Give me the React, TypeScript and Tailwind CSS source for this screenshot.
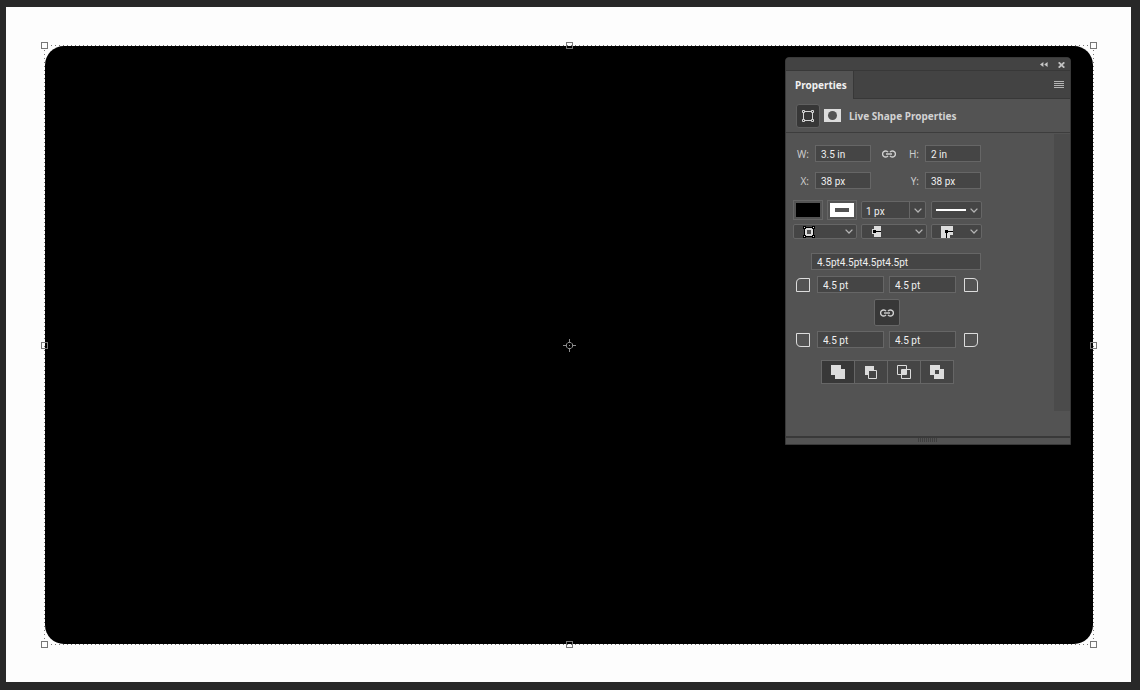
import type { ReactNode } from 'react';
import clsx from 'clsx';

const FIELD = 'h-[17px] min-w-0 border border-[#666666] bg-[#454545] px-[5px] pt-[2px] font-[Roboto,sans-serif] text-[10px] leading-[13px] text-[#f0f0f0] outline-none';

const HANDLES = [
  '-left-[3px] -top-[3px]',
  'left-1/2 -top-[3px] -ml-[3px]',
  '-right-[3px] -top-[3px]',
  '-left-[3px] top-1/2 -mt-[3px]',
  '-right-[3px] top-1/2 -mt-[3px]',
  '-left-[3px] -bottom-[3px]',
  'left-1/2 -bottom-[3px] -ml-[3px]',
  '-right-[3px] -bottom-[3px]',
];

function LinkIcon() {
  return (
    <svg width="14" height="8" viewBox="0 0 14 8" fill="none" stroke="#cfcfcf" strokeWidth="1.4">
      <path d="M6 2.2A3 3 0 1 0 6 5.8M8 2.2a3 3 0 1 1 0 3.6" />
      <path d="M4 4h6" />
    </svg>
  );
}

function Chevron() {
  return (
    <svg width="8" height="5" viewBox="0 0 8 5" fill="none" stroke="#b4b4b4" strokeWidth="1.3">
      <path d="M0.6 0.6L4 4l3.4-3.4" />
    </svg>
  );
}

function CornerIcon({ className }: { className?: string }) {
  return (
    <svg className={className} width="14" height="14" viewBox="0 0 14 14" fill="none" stroke="#dcdcdc">
      <path d="M0.5 13.5V5C0.5 2 2 0.5 5 0.5h8.5v13z" />
    </svg>
  );
}

function Field({ id, label, value, children }: { id: string; label: string; value: string; children?: ReactNode }) {
  return (
    <>
      <div className="flex items-center">
        {children}
        <label htmlFor={id} className="ml-auto pt-px text-[#cccccc]">{label}</label>
      </div>
      <input id={id} defaultValue={value} className={FIELD} />
    </>
  );
}

function IconSelect({ label, options, className, children }: { label: string; options: string[]; className: string; children: ReactNode }) {
  return (
    <div className={clsx('relative flex items-center justify-between rounded-[2px] border border-[#666666] bg-[#454545] pr-[3px]', className)}>
      {children}
      <Chevron />
      <select aria-label={label} className="absolute inset-0 appearance-none outline-none">
        {options.map((option) => (
          <option key={option} value={option} aria-label={option} />
        ))}
      </select>
    </div>
  );
}

function CornerRow({ names, bottom }: { names: [string, string]; bottom?: boolean }) {
  return (
    <div className="ml-[3px] flex items-center">
      <CornerIcon className={clsx(bottom && '-scale-y-100')} />
      <div className="ml-[7px] mr-2 flex gap-[5px]">
        {names.map((name) => (
          <input key={name} aria-label={name} defaultValue="4.5 pt" className={clsx(FIELD, 'w-[67px]')} />
        ))}
      </div>
      <CornerIcon className={clsx('-scale-x-100', bottom && '-scale-y-100')} />
    </div>
  );
}

const PATH_OPS = [
  {
    name: 'Unite shapes',
    icon: <path d="M0 0h10v4h4v10H4v-4H0z" fill="#dcdcdc" />,
  },
  {
    name: 'Subtract front shape',
    icon: (
      <>
        <path d="M1 1h9v9H1z" fill="#dcdcdc" />
        <path d="M4.5 5.5h8v8h-8z" fill="#454545" stroke="#dcdcdc" />
      </>
    ),
  },
  {
    name: 'Intersect shapes',
    icon: (
      <>
        <path d="M0.5 0.5h9v9h-9zM4.5 4.5h9v9h-9z" fill="none" stroke="#dcdcdc" />
        <path d="M5 5h4v4H5z" fill="#dcdcdc" />
      </>
    ),
  },
  {
    name: 'Exclude overlapping shapes',
    icon: <path fillRule="evenodd" d="M0 0h10v4h4v10H4v-4H0zM5 5v4h4V5z" fill="#dcdcdc" />,
  },
];

function PropertiesPanel() {
  return (
    <section className="absolute right-[23px] top-3 w-[286px] overflow-hidden rounded-t-[4px] border border-[#393939] bg-[#535353] text-[10px] leading-[14px]">
      <div className="flex h-[13px] items-center justify-end gap-[10px] border-b border-[#383838] bg-[#434343] pr-[5px] pt-px">
        <button aria-label="Collapse panel">
          <svg width="8" height="5" viewBox="0 0 8 5" fill="#c8c8c8">
            <path d="M3.4 0v5L0 2.5zM7.6 0v5L4.2 2.5z" />
          </svg>
        </button>
        <button aria-label="Close panel">
          <svg width="7" height="6" viewBox="0 0 7 6" stroke="#c0c0c0" strokeWidth="1.8">
            <path d="M0.7 0.3l5.6 5.4M6.3 0.3L0.7 5.7" />
          </svg>
        </button>
      </div>

      <div className="flex h-7 bg-[#434343]">
        <h2 className="w-[68px] border-r border-[#383838] bg-[#535353] pl-[9px] font-bold leading-7 text-[#f0f0f0]">Properties</h2>
        <div className="flex flex-1 items-center justify-end border-b border-[#383838] pr-[6px]">
          <button aria-label="Panel menu">
            <svg width="10" height="7" viewBox="0 0 10 7" fill="#b4b4b4">
              <path d="M0 0h10v1H0zM0 2h10v1H0zM0 4h10v1H0zM0 6h10v1H0z" />
            </svg>
          </button>
        </div>
      </div>

      <div className="flex h-[34px] items-center border-b border-[#3d3d3d] pl-[10px]">
        <button aria-label="Shape" className="flex size-6 items-center justify-center rounded-[3px] border border-[#606060] bg-[#373737]">
          <svg width="14" height="14" viewBox="0 0 14 14" fill="none" stroke="#d6d6d6">
            <path d="M4 2.5h6M4 11.5h6M2.5 4v6M11.5 4v6" />
            <path d="M1.5 1.5h2v2h-2zM10.5 1.5h2v2h-2zM1.5 10.5h2v2h-2zM10.5 10.5h2v2h-2z" />
          </svg>
        </button>
        <button aria-label="Mask" className="ml-1 flex h-[13px] w-[17px] items-center justify-center bg-[#dcdcdc]">
          <span className="size-[9px] rounded-full bg-[#535353]" />
        </button>
        <h3 className="ml-2 pt-px font-bold text-[#d2d2d2]">Live Shape Properties</h3>
      </div>

      <div className="flex h-[303px] justify-between">
        <form className="pl-[7px] pt-3">
          <div className="grid grid-cols-[16px_56px_42px_56px] gap-x-[6px] gap-y-[10px]">
            <Field id="width" label="W:" value="3.5 in" />
            <Field id="height" label="H:" value="2 in">
              <button type="button" aria-label="Link width and height" className="ml-[5px]">
                <LinkIcon />
              </button>
            </Field>
            <Field id="x" label="X:" value="38 px" />
            <Field id="y" label="Y:" value="38 px" />
          </div>

          <div className="mt-[11px] grid grid-cols-[64px_66px_51px] gap-1">
            <div className="flex gap-1">
              <button type="button" aria-label="Fill" className="h-5 w-[30px] border border-[#666666] p-[2px]">
                <span className="block h-full bg-black" />
              </button>
              <button type="button" aria-label="Stroke" className="h-5 w-[30px] border border-[#666666] p-[2px]">
                <span className="flex h-full items-center justify-center bg-white">
                  <span className="h-1 w-[14px] bg-[#535353]" />
                </span>
              </button>
            </div>
            <div className="mt-px flex h-[18px] w-[65px] overflow-hidden rounded-[2px] border border-[#666666] bg-[#454545]">
              <input aria-label="Stroke width" defaultValue="1 px" className="w-[48px] border-r border-[#666666] pl-1 pt-[2px] font-[Roboto,sans-serif] leading-[13px] text-[#f0f0f0] outline-none" />
              <button type="button" aria-label="Stroke width presets" className="flex flex-1 items-center justify-center">
                <Chevron />
              </button>
            </div>
            <IconSelect label="Stroke type" options={['Solid', 'Dashed', 'Dotted']} className="mt-px h-[18px]">
              <span className="ml-1 h-[2px] w-[30px] bg-white" />
            </IconSelect>

            <IconSelect label="Stroke alignment" options={['Inside', 'Center', 'Outside']} className="h-[15px]">
              <svg className="ml-[9px]" width="12" height="12" viewBox="0 0 12 12">
                <path d="M1 1h10v10H1z" fill="#dcdcdc" />
                <path d="M1.5 1.5h9v9h-9z" fill="none" stroke="#000" />
                <path d="M0 0h3v3H0zM9 0h3v3H9zM0 9h3v3H0zM9 9h3v3H9z" fill="#000" />
                <path d="M1 1h1v1H1zM10 1h1v1h-1zM1 10h1v1H1zM10 10h1v1h-1z" fill="#dcdcdc" />
                <path d="M4 4h4v4H4z" fill="#535353" />
              </svg>
            </IconSelect>
            <IconSelect label="Stroke caps" options={['Butt', 'Round', 'Square']} className="h-[15px]">
              <svg className="ml-[10px]" width="9" height="11" viewBox="0 0 9 11">
                <path d="M2 0h7v11H2V8H0V3h2z" fill="#dcdcdc" />
                <path d="M1 4h3v1h5v1H4v1H1z" fill="#000" />
              </svg>
            </IconSelect>
            <IconSelect label="Stroke corners" options={['Miter', 'Round', 'Bevel']} className="h-[15px]">
              <svg className="ml-[9px]" width="12" height="12" viewBox="0 0 12 12">
                <path d="M0 0h12v9H9v3H0z" fill="#dcdcdc" />
                <path d="M4 4h3v1h5v1H7v1H6v5H5V7H4z" fill="#000" />
              </svg>
            </IconSelect>
          </div>

          <input aria-label="Corner radii" defaultValue="4.5pt4.5pt4.5pt4.5pt" className={clsx(FIELD, 'ml-[18px] mt-[14px] block w-[170px]')} />
          <div className="mt-[6px]">
            <CornerRow names={['Top left radius', 'Top right radius']} />
          </div>
          <button type="button" aria-label="Link corner radii" className="mb-[5px] ml-[81px] mt-[6px] flex h-[27px] w-[26px] items-center justify-center rounded-[2px] border border-[#666666] bg-[#383838]">
            <LinkIcon />
          </button>
          <CornerRow names={['Bottom left radius', 'Bottom right radius']} bottom />

          <div className="ml-7 mt-3 flex">
            {PATH_OPS.map(({ name, icon }, i) => (
              <button
                key={name}
                type="button"
                aria-label={name}
                className={clsx('flex h-6 w-[34px] items-center justify-center border border-[#666666]', i === 0 ? 'bg-[#383838]' : '-ml-px bg-[#454545]')}
              >
                <svg width="14" height="14" viewBox="0 0 14 14">{icon}</svg>
              </button>
            ))}
          </div>
        </form>
        <div className="mt-px h-[277px] w-4 bg-[#4b4b4b]" />
      </div>

      <div className="flex h-2 justify-center border-t-2 border-[#393939]">
        <div className="h-1 w-5 bg-[repeating-linear-gradient(90deg,#404040_0_1px,transparent_1px_2px)]" />
      </div>
    </section>
  );
}

export default function App() {
  return (
    <div className="flex h-screen bg-[#282828] pb-2 pl-[6px] pr-[9px] pt-[7px] font-['Noto_Sans',sans-serif]">
      <main className="flex flex-1 bg-[#fdfdfd] pb-[37px] pl-[38px] pr-[37px] pt-[38px]">
        <div className="relative flex flex-1 p-px">
          <div className="flex flex-1 items-center justify-center rounded-[19px] bg-black">
            <svg width="13" height="13" viewBox="0 0 13 13" fill="none" stroke="#8c8c8c">
              <path d="M6.5 0v3M6.5 10v3M0 6.5h3M10 6.5h3M6 6.5h1" />
              <path d="M5 3.5h3L9.5 5v3L8 9.5H5L3.5 8V5z" />
            </svg>
          </div>
          <div className="absolute inset-x-0 top-0 h-px bg-[repeating-linear-gradient(90deg,transparent_0_3px,#777777_3px_4px)]" />
          <div className="absolute inset-x-0 bottom-0 h-px bg-[repeating-linear-gradient(90deg,transparent_0_3px,#777777_3px_4px)]" />
          <div className="absolute inset-y-0 left-0 w-px bg-[repeating-linear-gradient(180deg,transparent_0_1px,#777777_1px_2px,transparent_2px_4px)]" />
          <div className="absolute inset-y-0 right-0 w-px bg-[repeating-linear-gradient(180deg,transparent_0_1px,#777777_1px_2px,transparent_2px_4px)]" />
          {HANDLES.map((position) => (
            <span key={position} className={clsx('absolute size-[7px] border border-[#777777]', position.includes('1/2') ? 'bg-transparent' : 'bg-[#fdfdfd]', position)} />
          ))}
          <PropertiesPanel />
        </div>
      </main>
    </div>
  );
}
